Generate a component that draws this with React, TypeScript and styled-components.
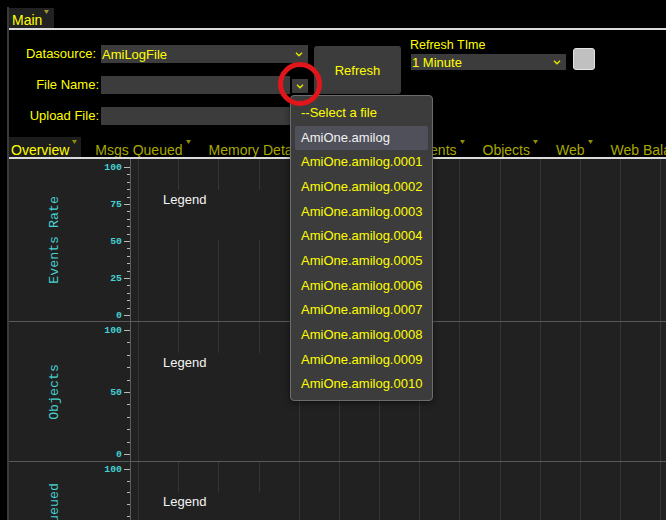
import React from "react";
import styled, { createGlobalStyle } from "styled-components";

const YELLOW = "#ffff00";
const OLIVE = "#a8a800";
const CYAN = "#46d2d2";

const GlobalStyle = createGlobalStyle`
  html, body { margin: 0; padding: 0; background: #000; }
  body { font-family: "Liberation Sans", Arial, sans-serif; overflow: hidden; }
  * { box-sizing: border-box; }
`;

const Page = styled.div`
  height: 520px;
  overflow: hidden;
  background: #000;
  padding: 7px 0 0 7px;
`;

const Frame = styled.div`
  height: 100%;
  border-left: 2px solid #3a3a3a;
  display: flex;
  flex-direction: column;
`;

const TopBar = styled.div`
  display: flex;
  padding-top: 1px;
  height: 21px;
`;

const TopTab = styled.div`
  display: flex;
  align-items: flex-start;
  height: 20px;
  padding: 2px 5px 0 3px;
  background: #222;
`;

const TopTabLabel = styled.span`
  margin-top: 2px;
  font-size: 14px;
  line-height: 16px;
  color: ${YELLOW};
`;

const Rule = styled.div`
  height: 2px;
  background: #dcdcdc;
  flex: none;
`;

const FormArea = styled.div`
  height: 107px;
  flex: none;
  display: flex;
  align-items: flex-start;
`;

const FieldGrid = styled.div`
  margin-top: 15px;
  display: grid;
  grid-template-columns: 90px 207px;
  column-gap: 2px;
  row-gap: 13px;
`;

const Label = styled.div<{ $pr?: number }>`
  text-align: right;
  padding-right: ${(p) => p.$pr ?? 0}px;
  font-size: 13px;
  line-height: 18px;
  color: ${YELLOW};
  white-space: nowrap;
`;

const SelectBox = styled.div<{ $w: number; $h: number }>`
  width: ${(p) => p.$w}px;
  height: ${(p) => p.$h}px;
  display: flex;
  align-items: center;
  justify-content: space-between;
  padding: 0 5px 0 1px;
  background: #3c3c3c;
  color: ${YELLOW};
  font-size: 13px;
  white-space: nowrap;
`;

const FileRow = styled.div`
  position: relative;
  display: flex;
  align-items: center;
  gap: 2px;
  width: 207px;
  height: 18px;
`;

const FileField = styled.div`
  width: 189px;
  height: 18px;
  background: #3c3c3c;
`;

const ChevronButton = styled.div`
  width: 16px;
  height: 14px;
  margin-top: 2px;
  display: flex;
  align-items: center;
  justify-content: center;
  background: #3e3e3e;
`;

const UploadField = styled.div`
  width: 207px;
  height: 18px;
  background: #3c3c3c;
`;

const RedCircle = styled.div`
  position: absolute;
  left: 177px;
  top: -14px;
  width: 44px;
  height: 44px;
  border: 5px solid #e0161b;
  border-radius: 50%;
  z-index: 3;
`;

const Dropdown = styled.div`
  position: absolute;
  left: 189px;
  top: 19px;
  width: 143px;
  padding: 5px 4px 3px;
  background: #3c3c3c;
  border: 1px solid #6c6c6c;
  border-radius: 4px;
  box-shadow: 0 2px 6px rgba(0, 0, 0, 0.5);
  z-index: 2;
`;

const Option = styled.div<{ $active?: boolean }>`
  height: 24.67px;
  line-height: 24.67px;
  padding-left: 6px;
  font-size: 13px;
  white-space: nowrap;
  border-radius: 2px;
  color: ${(p) => (p.$active ? "#f2f2f2" : YELLOW)};
  background: ${(p) => (p.$active ? "#50505b" : "transparent")};
`;

const RefreshButton = styled.button`
  margin: 16px 0 0 6px;
  width: 87px;
  height: 48px;
  border: none;
  border-radius: 3px;
  background: #3c3c3c;
  color: ${YELLOW};
  font-family: "Liberation Sans", Arial, sans-serif;
  font-size: 13px;
  padding: 0;
`;

const RefreshGroup = styled.div`
  margin: 8px 0 0 9px;
  display: flex;
  flex-direction: column;
  gap: 1px;
`;

const SmallLabel = styled.div`
  font-size: 12.5px;
  line-height: 15px;
  color: ${YELLOW};
`;

const RefreshSelect = styled(SelectBox)`
  margin-left: 1px;
`;

const Swatch = styled.div`
  margin: 18px 0 0 7px;
  width: 22px;
  height: 22px;
  border-radius: 3px;
  background: #c0c0c0;
  border: 1px solid #e4e4e4;
`;

const TabBar = styled.div`
  height: 20px;
  flex: none;
  display: flex;
  gap: 12px;
  white-space: nowrap;
  overflow: hidden;
`;

const Tab = styled.div<{ $active?: boolean }>`
  display: flex;
  align-items: flex-start;
  flex: none;
  padding: 3px 4px 0 2px;
  background: ${(p) => (p.$active ? "#1d1d1d" : "transparent")};
`;

const TabLabel = styled.span<{ $active?: boolean }>`
  margin-top: 2px;
  font-size: 14px;
  line-height: 16px;
  color: ${(p) => (p.$active ? YELLOW : OLIVE)};
`;

const CaretSvg = styled.svg<{ $ml: number }>`
  margin-left: ${(p) => p.$ml}px;
  flex: none;
`;

const Charts = styled.div`
  flex: 1;
  background: #212121;
  overflow: hidden;
`;

const ChartRow = styled.div<{ $h: number; $sep: boolean }>`
  height: ${(p) => p.$h}px;
  display: flex;
  border-bottom: ${(p) => (p.$sep ? "1px solid #595959" : "none")};
  box-sizing: content-box;
`;

const TitleCol = styled.div`
  width: 90px;
  display: flex;
  align-items: center;
  justify-content: center;
  padding-left: 1px;
`;

const TitleText = styled.span`
  writing-mode: vertical-rl;
  transform: rotate(180deg);
  font-family: "Liberation Mono", "Courier New", monospace;
  font-size: 13.3px;
  color: ${CYAN};
  white-space: nowrap;
`;

const AxisSvg = styled.svg`
  flex: none;
  display: block;
`;

const Plot = styled.div`
  flex: 1;
  position: relative;
  background-image: repeating-linear-gradient(
    90deg,
    transparent 0px,
    transparent 7px,
    #353535 7px,
    #353535 8px,
    transparent 8px,
    transparent 40.17px
  );
`;

const LegendBox = styled.div<{ $top: number; $h?: number }>`
  position: absolute;
  left: 12px;
  top: ${(p) => p.$top}px;
  width: 150px;
  ${(p) => (p.$h ? `height: ${p.$h}px;` : "bottom: 0;")}
  background: #212121;
  padding-left: 20px;
  font-size: 13px;
  line-height: 20px;
  color: #f4f4f4;
`;

const Chevron: React.FC = () => (
  <svg width="8" height="5" viewBox="0 0 8 5">
    <polyline points="1,0.8 4,3.8 7,0.8" fill="none" stroke="#e8e800" strokeWidth="1.4" />
  </svg>
);

const Caret: React.FC<{ color: string; ml: number }> = ({ color, ml }) => (
  <CaretSvg $ml={ml} width="5" height="4" viewBox="0 0 5 4">
    <polygon points="0,0 5,0 2.5,4" fill={color} />
  </CaretSvg>
);

type ChartSpec = {
  title: string;
  height: number;
  top: number;
  range: number;
  majors: number[];
  minor: number;
  legendTop: number;
  legendH?: number;
  sep: boolean;
};

const Axis: React.FC<{ spec: ChartSpec }> = ({ spec }) => {
  const ticks: React.ReactNode[] = [];
  for (let v = 0; v <= 100; v += spec.minor) {
    const y = Math.round(spec.top + spec.range * (1 - v / 100)) + 0.5;
    const major = spec.majors.includes(v);
    ticks.push(
      <line key={"t" + v} x1={major ? 25 : 28} x2={31} y1={y} y2={y} stroke="#b8b8b8" strokeWidth="1" />
    );
    if (major) {
      ticks.push(
        <text
          key={"l" + v}
          x={23}
          y={y}
          textAnchor="end"
          dominantBaseline="central"
          fontFamily='"Liberation Mono", "Courier New", monospace'
          fontSize="9.8"
          fontWeight="bold"
          fill={CYAN}
        >
          {v}
        </text>
      );
    }
  }
  return (
    <AxisSvg width="32" height={spec.height} viewBox={`0 0 32 ${spec.height}`}>
      <line x1="31.5" x2="31.5" y1="0" y2={spec.height} stroke="#5a5a5a" strokeWidth="1" />
      {ticks}
    </AxisSvg>
  );
};

const charts: ChartSpec[] = [
  { title: "Events Rate", height: 162, top: 8, range: 148, majors: [0, 25, 50, 75, 100], minor: 5, legendTop: 31, legendH: 50, sep: true },
  { title: "Objects", height: 139, top: 8, range: 124, majors: [0, 50, 100], minor: 10, legendTop: 31, sep: true },
  { title: "Msgs Queued", height: 130, top: 7, range: 117, majors: [0, 50, 100], minor: 10, legendTop: 30, sep: false },
];

const files = [
  "AmiOne.amilog",
  "AmiOne.amilog.0001",
  "AmiOne.amilog.0002",
  "AmiOne.amilog.0003",
  "AmiOne.amilog.0004",
  "AmiOne.amilog.0005",
  "AmiOne.amilog.0006",
  "AmiOne.amilog.0007",
  "AmiOne.amilog.0008",
  "AmiOne.amilog.0009",
  "AmiOne.amilog.0010",
];

const tabs = ["Overview", "Msgs Queued", "Memory Details", "Triggers and Events", "Objects", "Web", "Web Balancer", "Timers"];

export default function App() {
  return (
    <>
      <GlobalStyle />
      <Page>
        <Frame>
          <TopBar>
            <TopTab>
              <TopTabLabel>Main</TopTabLabel>
              <Caret color="#a09a30" ml={2} />
            </TopTab>
          </TopBar>
          <Rule />
          <FormArea>
            <FieldGrid>
              <Label $pr={3}>Datasource:</Label>
              <SelectBox $w={207} $h={18}>
                <span>AmiLogFile</span>
                <Chevron />
              </SelectBox>
              <Label>File Name:</Label>
              <FileRow>
                <FileField />
                <ChevronButton>
                  <Chevron />
                </ChevronButton>
                <RedCircle />
                <Dropdown>
                  <Option>--Select a file</Option>
                  {files.map((f, i) => (
                    <Option key={f} $active={i === 0}>
                      {f}
                    </Option>
                  ))}
                </Dropdown>
              </FileRow>
              <Label>Upload File:</Label>
              <UploadField />
            </FieldGrid>
            <RefreshButton>Refresh</RefreshButton>
            <RefreshGroup>
              <SmallLabel>Refresh TIme</SmallLabel>
              <RefreshSelect $w={155} $h={16}>
                <span>1 Minute</span>
                <Chevron />
              </RefreshSelect>
            </RefreshGroup>
            <Swatch />
          </FormArea>
          <TabBar>
            {tabs.map((t, i) => (
              <Tab key={t} $active={i === 0}>
                <TabLabel $active={i === 0}>{t}</TabLabel>
                <Caret color="#8f8f00" ml={3} />
              </Tab>
            ))}
          </TabBar>
          <Rule />
          <Charts>
            {charts.map((c) => (
              <ChartRow key={c.title} $h={c.height} $sep={c.sep}>
                <TitleCol>
                  <TitleText>{c.title}</TitleText>
                </TitleCol>
                <Axis spec={c} />
                <Plot>
                  <LegendBox $top={c.legendTop} $h={c.legendH}>
                    Legend
                  </LegendBox>
                </Plot>
              </ChartRow>
            ))}
          </Charts>
        </Frame>
      </Page>
    </>
  );
}
